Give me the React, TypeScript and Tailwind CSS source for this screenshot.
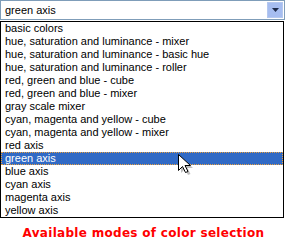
const modes = [
  "basic colors",
  "hue, saturation and luminance - mixer",
  "hue, saturation and luminance - basic hue",
  "hue, saturation and luminance - roller",
  "red, green and blue - cube",
  "red, green and blue - mixer",
  "gray scale mixer",
  "cyan, magenta and yellow - cube",
  "cyan, magenta and yellow - mixer",
  "red axis",
  "green axis",
  "blue axis",
  "cyan axis",
  "magenta axis",
  "yellow axis",
];

const selected = "green axis";

const Cursor = () => (
  <svg
    className="absolute left-[177px] top-[153px]"
    width="16"
    height="22"
    viewBox="0 0 16 22"
  >
    <path
      d="M2.5 2.5 L2.5 18.5 L6.5 14.5 L9.5 20.5 L12 19.5 L9 13.5 L14.5 13.5 Z"
      fill="rgba(0,0,0,0.25)"
      transform="translate(1.5 1.5)"
    />
    <path
      d="M1.5 1.5 L1.5 17.5 L5.5 13.5 L8.5 19.5 L11 18.5 L8 12.5 L13.5 12.5 Z"
      fill="white"
      stroke="black"
      strokeWidth="1"
      strokeLinejoin="miter"
    />
  </svg>
);

export default function App() {
  return (
    <div className="relative w-[287px] h-[247px] bg-white font-['Liberation_Sans',sans-serif] text-[11px] text-black">
      {/* combobox */}
      <div className="flex h-[20px] w-[285px] border border-[#7f9db9] bg-white">
        <div className="flex flex-1 items-center pl-[4px]">{selected}</div>
        <div className="m-[1px] flex w-[16px] items-center justify-center border border-[#b5c8ef] bg-[#a6bdf0]">
          <svg width="7" height="4" viewBox="0 0 7 4">
            <path d="M0 0 H7 L3.5 4 Z" fill="#1e2b4a" />
          </svg>
        </div>
      </div>

      {/* list */}
      <div className="mt-[1px] w-[284px] border border-black">
        {modes.map((m) => (
          <div
            key={m}
            className={
              m === selected
                ? "flex h-[13px] items-center border border-dotted border-[#e8a040] bg-[#316ac5] pl-[3px] text-white"
                : "flex h-[13px] items-center pl-[4px]"
            }
          >
            {m}
          </div>
        ))}
      </div>

      <div className="mt-[6px] text-center font-['DejaVu_Sans',sans-serif] text-[12px] font-bold tracking-[0.3px] text-[#ff0000]">
        Available modes of color selection
      </div>

      <Cursor />
    </div>
  );
}
